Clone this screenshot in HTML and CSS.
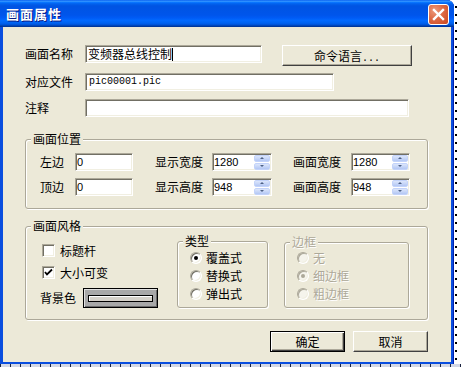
FILE: index.html
```html
<!DOCTYPE html>
<html lang="zh-CN">
<head>
    <meta charset="UTF-8">
    <title>画面属性</title>
    <link rel="stylesheet" href="styles.css">
</head>
<body>
    <div class="screen">
        <div class="window">
            <!-- Title bar -->
            <div class="titlebar">
                <span class="title">画面属性</span>
                <span class="close">
                    <svg width="19" height="19" viewBox="0 0 19 19">
                        <path d="M5 5 L14 14 M14 5 L5 14" stroke="#fff" stroke-width="2.4" stroke-linecap="square"/>
                    </svg>
                </span>
            </div>

            <div class="client">
                <div class="field-row">
                    <span class="lbl lbl-main">画面名称</span>
                    <div class="edit edit-name">变频器总线控制<span class="caret"></span></div>
                    <button class="btn btn-cmd">命令语言<span class="dots">...</span></button>
                </div>
                <div class="field-row row-file">
                    <span class="lbl lbl-main">对应文件</span>
                    <div class="edit edit-file">pic00001.pic</div>
                </div>
                <div class="field-row row-note">
                    <span class="lbl lbl-main">注释</span>
                    <div class="edit edit-note"></div>
                </div>

                <!-- 画面位置 -->
                <div class="group group-pos">
                    <span class="legend">画面位置</span>
                    <div class="pos-body">
                        <div class="pos-row">
                            <span class="lbl lbl-side">左边</span>
                            <div class="edit edit-pos">0</div>
                            <span class="lbl lbl-disp">显示宽度</span>
                            <div class="edit spin spin-disp">1280
                                <div class="spin-btns"><span class="spin-up"></span><span class="spin-down"></span></div>
                            </div>
                            <span class="lbl lbl-scr">画面宽度</span>
                            <div class="edit spin spin-scr">1280
                                <div class="spin-btns"><span class="spin-up"></span><span class="spin-down"></span></div>
                            </div>
                        </div>
                        <div class="pos-row">
                            <span class="lbl lbl-side">顶边</span>
                            <div class="edit edit-pos">0</div>
                            <span class="lbl lbl-disp">显示高度</span>
                            <div class="edit spin spin-disp">948
                                <div class="spin-btns"><span class="spin-up"></span><span class="spin-down"></span></div>
                            </div>
                            <span class="lbl lbl-scr">画面高度</span>
                            <div class="edit spin spin-scr">948
                                <div class="spin-btns"><span class="spin-up"></span><span class="spin-down"></span></div>
                            </div>
                        </div>
                    </div>
                </div>

                <!-- 画面风格 -->
                <div class="group group-style">
                    <span class="legend">画面风格</span>
                    <div class="style-body">
                        <div class="left-col">
                            <div class="check-row">
                                <span class="checkbox"></span>
                                <span class="lbl">标题杆</span>
                            </div>
                            <div class="check-row">
                                <span class="checkbox">
                                    <svg width="11" height="11" viewBox="0 0 11 11">
                                        <path d="M2 5 L4 7.5 L9 2.5" fill="none" stroke="#000" stroke-width="1.8"/>
                                    </svg>
                                </span>
                                <span class="lbl">大小可变</span>
                            </div>
                            <div class="bg-row">
                                <span class="lbl lbl-bg">背景色</span>
                                <span class="color-btn"><span class="swatch"></span></span>
                            </div>
                        </div>

                        <div class="group type-box">
                            <span class="legend">类型</span>
                            <div class="radio-list">
                                <div class="radio-row"><span class="radio checked"></span><span class="lbl">覆盖式</span></div>
                                <div class="radio-row"><span class="radio"></span><span class="lbl">替换式</span></div>
                                <div class="radio-row"><span class="radio"></span><span class="lbl">弹出式</span></div>
                            </div>
                        </div>

                        <div class="group frame-box disabled">
                            <span class="legend">边框</span>
                            <div class="radio-list">
                                <div class="radio-row"><span class="radio"></span><span class="lbl">无</span></div>
                                <div class="radio-row"><span class="radio checked"></span><span class="lbl">细边框</span></div>
                                <div class="radio-row"><span class="radio"></span><span class="lbl">粗边框</span></div>
                            </div>
                        </div>
                    </div>
                </div>

                <div class="actions">
                    <button class="btn btn-action btn-default">确定</button>
                    <button class="btn btn-action">取消</button>
                </div>
            </div>
        </div>
        <div class="ruler"></div>
    </div>
</body>
</html>
```

FILE: styles.css
```css
body {
    margin: 0;
    background-color: #fff;
    background-image: radial-gradient(circle, #000 0.8px, transparent 1.2px);
    background-size: 8px 8px;
    background-position: 4px 3px;
    font-family: "Noto Sans CJK SC", "Liberation Sans", sans-serif;
    font-size: 12px;
    color: #000;
}

.screen {
    width: 461px;
}

.window {
    width: 454px;
    height: 364px;
    display: flex;
    flex-direction: column;
    background-color: #0A4EDF;
    box-shadow: inset -1px 0 #0020B0;
    border-top-right-radius: 7px;
    overflow: hidden;
}

.titlebar {
    height: 27px;
    flex: none;
    display: flex;
    align-items: center;
    justify-content: space-between;
    padding: 0 5px 0 6px;
    background: linear-gradient(to bottom,
        #0058EE 0%, #3593FF 4%, #288EFF 6%, #127DFF 8%, #036FFC 10%,
        #0262EE 14%, #0057E5 20%, #0054E3 24%, #0055EB 56%, #005BF5 66%,
        #026AFE 76%, #0062EF 86%, #0052D6 92%, #0040AB 96%, #003092 100%);
}

.title {
    color: #fff;
    font-weight: bold;
    font-size: 13px;
    line-height: 14px;
    letter-spacing: 1px;
    text-shadow: 1px 1px #0A1883;
}

.close {
    width: 21px;
    height: 21px;
    box-sizing: border-box;
    border: 1px solid #fff;
    border-radius: 3px;
    background: radial-gradient(circle at 30% 30%, #EC9A7C 0%, #DE6A45 45%, #C9461E 100%);
    display: flex;
    align-items: center;
    justify-content: center;
    margin-top: 1px;
}

.client {
    flex: 1;
    margin: 0 3px 2px 3px;
    padding: 18px 23px 0 22px;
    background-color: #ECE9D8;
}

.field-row {
    display: flex;
    align-items: flex-start;
}

.row-file {
    margin-top: 7px;
}

.row-note {
    margin-top: 8px;
}

.lbl {
    line-height: 18px;
    white-space: nowrap;
}

.lbl-main {
    width: 60px;
}

.edit {
    box-sizing: border-box;
    height: 18px;
    padding: 0 2px;
    line-height: 16px;
    white-space: nowrap;
    overflow: hidden;
    background-color: #fff;
    border: 1px solid;
    border-color: #ACA899 #fff #fff #ACA899;
    box-shadow: inset 1px 1px #716F64, inset -1px -1px #F1EFE2;
}

.edit-name {
    width: 177px;
}

.caret {
    display: inline-block;
    width: 1px;
    height: 13px;
    background-color: #000;
    vertical-align: -2px;
}

.edit-file {
    width: 249px;
    padding-left: 3px;
    font-family: "Liberation Mono", monospace;
    font-size: 10px;
}

.edit-note {
    width: 324px;
}

.btn {
    box-sizing: border-box;
    height: 21px;
    padding: 0;
    font-family: "Noto Sans CJK SC", "Liberation Sans", sans-serif;
    font-size: 12px;
    color: #000;
    background-color: #ECE9D8;
    border: 1px solid;
    border-color: #fff #404040 #404040 #fff;
    box-shadow: inset -1px -1px #ACA899;
}

.btn-cmd {
    width: 130px;
    margin-left: 20px;
}

.dots {
    font-family: "Liberation Mono", monospace;
    font-size: 10px;
}

/* group boxes */
.group {
    box-sizing: border-box;
    border: 1px solid #ACA899;
    border-radius: 3px;
    box-shadow: inset 1px 1px #fff, 1px 1px #fff;
}

.legend {
    display: block;
    width: fit-content;
    height: 14px;
    line-height: 14px;
    margin: -8px 0 -6px 5px;
    padding: 0 2px;
    background-color: #ECE9D8;
    white-space: nowrap;
}

.group-pos {
    margin-top: 22px;
}

.pos-body {
    padding: 13px 0 12px 14px;
}

.pos-row {
    display: flex;
    align-items: center;
    height: 18px;
}

.pos-row + .pos-row {
    margin-top: 7px;
}

.pos-row .edit {
    font-family: "Liberation Sans", sans-serif;
    font-size: 11px;
    padding-left: 1px;
}

.lbl-side {
    width: 35px;
}

.edit-pos {
    width: 58px;
}

.lbl-disp {
    width: 57px;
    margin-left: 22px;
}

.lbl-scr {
    width: 58px;
    margin-left: 21px;
}

.spin {
    display: flex;
    align-items: center;
    padding-right: 1px;
}

.spin-disp {
    width: 60px;
}

.spin-scr {
    width: 59px;
}

.spin-btns {
    margin-left: auto;
    width: 16px;
    display: flex;
    flex-direction: column;
    gap: 1px;
}

.spin-up,
.spin-down {
    box-sizing: border-box;
    height: 7px;
    border: 1px solid #C3D3FA;
    border-radius: 2px;
    background: linear-gradient(to bottom, #DCE6FB, #B3C7F4);
    display: flex;
    align-items: center;
    justify-content: center;
}

.spin-up::after,
.spin-down::after {
    content: "";
    border-left: 2px solid transparent;
    border-right: 2px solid transparent;
}

.spin-up::after {
    border-bottom: 2px solid #4D6185;
}

.spin-down::after {
    border-top: 2px solid #4D6185;
}

.group-style {
    margin-top: 17px;
}

.style-body {
    display: flex;
    align-items: flex-start;
    padding: 0 0 11px 14px;
}

.left-col {
    width: 137px;
    margin-top: 17px;
}

.check-row {
    display: flex;
    align-items: center;
    gap: 5px;
    height: 13px;
    padding-left: 2px;
}

.check-row + .check-row {
    margin-top: 9px;
}

.checkbox {
    box-sizing: border-box;
    width: 13px;
    height: 13px;
    display: flex;
    align-items: center;
    justify-content: center;
    background-color: #fff;
    border: 1px solid;
    border-color: #ACA899 #fff #fff #ACA899;
    box-shadow: inset 1px 1px #716F64, inset -1px -1px #F1EFE2;
}

.bg-row {
    display: flex;
    align-items: center;
    height: 20px;
    margin-top: 9px;
}

.lbl-bg {
    width: 43px;
}

.color-btn {
    box-sizing: border-box;
    width: 75px;
    height: 20px;
    display: flex;
    align-items: center;
    justify-content: center;
    background-color: #A8A8A8;
    border: 1px solid #000;
    box-shadow: inset 1px 1px #E0E0E0, inset -1px -1px #6A6A6A;
}

.swatch {
    box-sizing: border-box;
    width: 65px;
    height: 7px;
    border: 1px solid #000;
    background-color: #D4D0C8;
    box-shadow: inset 1px 1px #fff;
}

.type-box {
    width: 91px;
    height: 67px;
    margin-top: 14px;
}

.frame-box {
    width: 125px;
    height: 66px;
    margin-top: 15px;
    margin-left: 16px;
}

.radio-list {
    padding: 7px 0 0 12px;
}

.frame-box .radio-list {
    padding: 6px 0 0 12px;
}

.radio-row {
    display: flex;
    align-items: center;
    gap: 4px;
    height: 18px;
}

.radio {
    box-sizing: border-box;
    width: 12px;
    height: 12px;
    border-radius: 50%;
    display: flex;
    align-items: center;
    justify-content: center;
    background-color: #fff;
    border: 1px solid;
    border-color: #ACA899 #fff #fff #ACA899;
    box-shadow: inset 1px 1px #716F64, inset -1px -1px #F1EFE2;
}

.radio.checked::after {
    content: "";
    width: 4px;
    height: 4px;
    border-radius: 50%;
    background-color: #000;
}

.disabled .legend,
.disabled .lbl {
    color: #ACA899;
    text-shadow: 1px 1px #fff;
}

.disabled .radio {
    background-color: #F5F4EC;
    box-shadow: inset 1px 1px #ACA899, inset -1px -1px #F1EFE2;
}

.disabled .radio.checked::after {
    background-color: #ACA899;
}

.actions {
    display: flex;
    justify-content: flex-end;
    gap: 8px;
    margin-top: 11px;
}

.btn-action {
    width: 75px;
}

.btn-default {
    border: 1px solid #000;
    box-shadow: inset 1px 1px #fff, inset -1px -1px #404040, inset -2px -2px #ACA899;
}

.ruler {
    height: 3px;
    background: repeating-linear-gradient(90deg, #1B2440 0 1px, #D3D8E6 1px 10px);
}
```
